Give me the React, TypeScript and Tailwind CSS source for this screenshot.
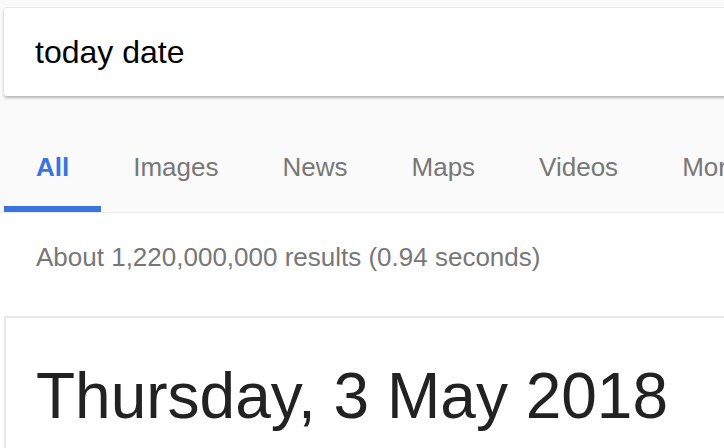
import React from 'react';

const tabs = ['All', 'Images', 'News', 'Maps', 'Videos', 'More'];

const App: React.FC = () => {
  return (
    <div
      className="w-[724px] h-[448px] overflow-hidden bg-white"
      style={{ fontFamily: '"Liberation Sans", Arial, sans-serif' }}
    >
      {/* search box + tabs */}
      <div className="bg-[#fafafa] pt-[7px]">
        <div className="ml-[4px] w-[800px] h-[89px] flex items-center pl-[31px] bg-white rounded-[3px] border-t border-[#e8e8e8] shadow-[0_2px_3px_rgba(0,0,0,0.28)]">
          <span className="text-[32px] leading-[36px] text-black">today date</span>
        </div>

        <div className="flex pl-[4px] pt-[56px] whitespace-nowrap">
          {tabs.map((tab, i) => (
            <div
              key={tab}
              className={
                i === 0
                  ? 'px-[32px] pb-[24px] border-b-[6px] border-[#3a74de] text-[26px] leading-[30px] font-bold text-[#3a74de]'
                  : 'px-[32px] pb-[24px] border-b-[6px] border-transparent text-[26px] leading-[30px] text-[#777777]'
              }
            >
              {tab}
            </div>
          ))}
        </div>
        <div className="h-[1px] bg-[#ebebeb]" />
      </div>

      <div className="pl-[36px] pt-[29px] text-[26px] leading-[30px] text-[#777777] whitespace-nowrap">
        About 1,220,000,000 results (0.94 seconds)
      </div>

      {/* date card */}
      <div className="mt-[44px] ml-[4px] w-[800px] h-[200px] bg-white border-2 border-[#e8e8e8] pl-[30px] pt-[42px]">
        <div className="text-[64px] leading-[72px] text-[#222222] whitespace-nowrap">
          Thursday, 3 May 2018
        </div>
      </div>
    </div>
  );
};

export default App;
